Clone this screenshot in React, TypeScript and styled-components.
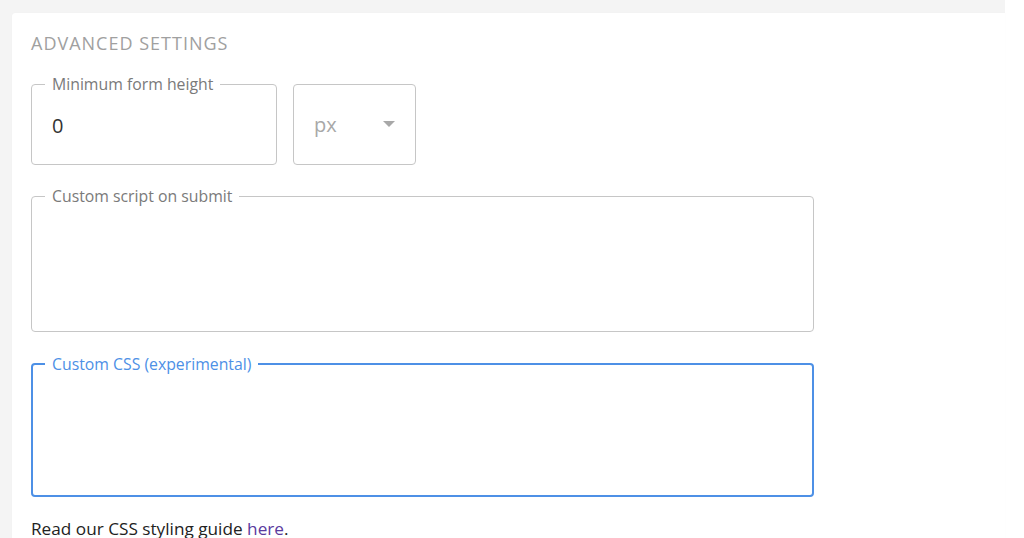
import React from "react";
import styled, { createGlobalStyle } from "styled-components";

const Global = createGlobalStyle`
  html, body { margin: 0; padding: 0; background: #ffffff; }
  body { font-family: "Open Sans", Lato, sans-serif; }
  * { box-sizing: border-box; }
`;

const Page = styled.div`
  width: 1005px;
  min-height: 538px;
  background: #f4f4f4;
  padding: 13px 0 0 12px;
  display: flex;
`;

const Card = styled.section`
  flex: 1;
  background: #ffffff;
  border-top-left-radius: 3px;
  box-shadow: 0 0 1px rgba(0, 0, 0, 0.06);
  padding: 18px 19px 40px;
  display: flex;
  flex-direction: column;
  align-items: flex-start;
`;

const Heading = styled.h2`
  margin: 0;
  font-size: 18px;
  line-height: 24px;
  font-weight: 400;
  letter-spacing: 1px;
  color: #a0a0a0;
`;

const Row = styled.div`
  display: flex;
  gap: 16px;
  margin-top: 20px;
`;

const Field = styled.fieldset<{ $focused?: boolean; $width: number; $gap?: number }>`
  margin: ${(p) => p.$gap ?? 0}px 0 0 0;
  padding: 0 ${(p) => (p.$focused ? 12 : 13)}px;
  width: ${(p) => p.$width}px;
  min-width: 0;
  border: ${(p) => (p.$focused ? "2px solid #4d90e6" : "1px solid #c6c6c6")};
  border-radius: 4px;
  background: #ffffff;
`;

const Legend = styled.legend<{ $focused?: boolean }>`
  padding: 0 7px;
  font-size: 15.8px;
  line-height: 18px;
  margin-top: -1px;
  color: ${(p) => (p.$focused ? "#4d90e6" : "#7a7a7a")};
`;

const TextInput = styled.input`
  display: block;
  width: 100%;
  height: 65px;
  margin-bottom: 6px;
  padding: 0 7px;
  border: none;
  outline: none;
  background: transparent;
  font-family: inherit;
  font-size: 20px;
  color: #333333;
`;

const Area = styled.textarea<{ $height: number }>`
  display: block;
  width: 100%;
  height: ${(p) => p.$height}px;
  padding: 8px 7px;
  border: none;
  outline: none;
  resize: none;
  background: transparent;
  font-family: inherit;
  font-size: 16px;
`;

const Select = styled.div`
  margin-top: 9px;
  width: 123px;
  height: 81px;
  border: 1px solid #c6c6c6;
  border-radius: 4px;
  display: flex;
  align-items: center;
  justify-content: space-between;
  padding: 0 20px 0 20px;
  font-size: 20px;
  color: #a8a8a8;
`;

const Caret = styled.span`
  width: 0;
  height: 0;
  border-left: 6px solid transparent;
  border-right: 6px solid transparent;
  border-top: 6px solid #a8a8a8;
  margin-top: -2px;
`;

const Note = styled.p`
  margin: 20px 0 0;
  font-size: 17.2px;
  line-height: 24px;
  color: #222222;
`;

const Link = styled.a`
  color: #5a3a9e;
  text-decoration: none;
`;

export default function App() {
  return (
    <>
      <Global />
      <Page>
        <Card>
          <Heading>ADVANCED SETTINGS</Heading>
          <Row>
            <Field $width={246}>
              <Legend>Minimum form height</Legend>
              <TextInput defaultValue="0" />
            </Field>
            <Select>
              <span>px</span>
              <Caret />
            </Select>
          </Row>
          <Field $width={783} $gap={22}>
            <Legend>Custom script on submit</Legend>
            <Area $height={126} />
          </Field>
          <Field $width={783} $gap={23} $focused>
            <Legend $focused>Custom CSS (experimental)</Legend>
            <Area $height={122} />
          </Field>
          <Note>
            Read our CSS styling guide <Link href="#">here</Link>.
          </Note>
        </Card>
      </Page>
    </>
  );
}
